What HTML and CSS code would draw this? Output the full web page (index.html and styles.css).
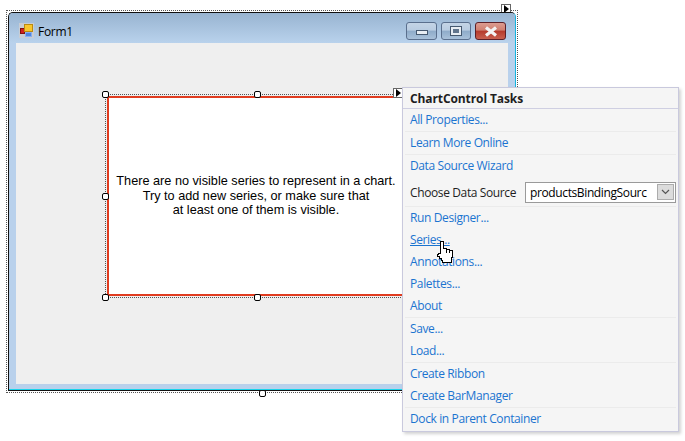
FILE: index.html
```html
<!DOCTYPE html>
<html lang="en">
<head>
<meta charset="utf-8">
<title>ChartControl Tasks</title>
<link rel="stylesheet" href="styles.css">
</head>
<body>
<main class="canvas">
  <div class="form-select"></div>
  <span class="tag tag-form"><i></i></span>
  <span class="handle h-form"></span>
  <section class="form">
    <header class="titlebar">
      <svg class="form-icon" width="16" height="16" viewBox="0 0 16 16">
        <rect x="0" y="0" width="15" height="15" fill="#c9cdd3"/>
        <rect x="1.500" y="5.500" width="4" height="5" fill="#d0201c" stroke="#801010"/>
        <rect x="5.500" y="1.500" width="8" height="7" fill="#f8c62c" stroke="#b98a10"/>
        <rect x="6.500" y="9.500" width="6" height="4" fill="#4f84e0" stroke="#86aeee"/>
      </svg>
      <span class="form-title">Form1</span>
      <div class="winbtns">
        <button class="winbtn"><span class="glyph-min"></span></button>
        <button class="winbtn"><span class="glyph-max"></span></button>
        <button class="winbtn winbtn-close">
          <svg width="16" height="11" viewBox="0 0 16 11"><path d="M3 1.500 L13 9.500 M13 1.500 L3 9.500" stroke="#f4f4f4" stroke-width="3.200" fill="none"/></svg>
        </button>
      </div>
    </header>
    <div class="client"></div>
  </section>
  <div class="chart-select"></div>
  <div class="chart">
    <p>There are no visible series to represent in a chart.<br>Try to add new series, or make sure that<br>at least one of them is visible.</p>
  </div>
  <span class="handle h-tl"></span>
  <span class="handle h-tm"></span>
  <span class="handle h-ml"></span>
  <span class="handle h-bl"></span>
  <span class="handle h-bm"></span>
  <span class="tag tag-chart"><i></i></span>
  <aside class="tasks">
    <h2 class="tasks-head">ChartControl Tasks</h2>
    <div class="group">
      <a class="row">All Properties...</a>
    </div>
    <div class="group">
      <a class="row">Learn More Online</a>
    </div>
    <div class="group">
      <a class="row">Data Source Wizard</a>
      <div class="row-choose">
        <label>Choose Data Source</label>
        <div class="combo"><span class="combo-text">productsBindingSourc</span>
          <span class="combo-btn"><svg width="9" height="6" viewBox="0 0 9 6"><path d="M1 1 L4.500 4.500 L8 1" fill="none" stroke="#555" stroke-width="1.200"/></svg></span>
        </div>
      </div>
    </div>
    <div class="group">
      <a class="row">Run Designer...</a>
      <a class="row row-hover">Series...</a>
      <a class="row">Annotations...</a>
      <a class="row">Palettes...</a>
      <a class="row">About</a>
    </div>
    <div class="group">
      <a class="row">Save...</a>
      <a class="row">Load...</a>
    </div>
    <div class="group">
      <a class="row">Create Ribbon</a>
      <a class="row">Create BarManager</a>
    </div>
    <div class="group group-last">
      <a class="row">Dock in Parent Container</a>
    </div>
  </aside>
  <svg class="cursor" width="17" height="23" viewBox="0 0 17 23" shape-rendering="crispEdges">
    <path d="M3.500 .5 H6.500 V7.500 H9.500 V8.500 H12.500 V9.500 H15.500 V16.500 H14.500 V21.500 H5.500 V19.500 H4.500 V17.500 H2.500 V15.500 H.5 V13.500 H1.500 V12.500 H3.500 Z" fill="#fff" stroke="#000"/>
    <path d="M9.500 8 V12 M12.500 9 V12" stroke="#000" fill="none"/>
  </svg>
</main>
</body>
</html>
```
FILE: styles.css
```css
* { box-sizing: border-box; }
html, body { margin: 0; padding: 0; background: #fff; }
.canvas { position: relative; width: 685px; height: 441px; overflow: hidden; font-family: "Open Sans", "Noto Sans", sans-serif; }

.form-select { position: absolute; left: 6px; top: 10px; width: 512px; height: 383px; border: 1px dotted #555; }
.form { position: absolute; left: 8px; top: 12px; width: 508px; height: 379px; display: flex; flex-direction: column; border: 1px solid #111; border-right-color: #14b4e0; border-radius: 5px 5px 0 0; box-shadow: inset 0 -1px 0 #19d3ea; background: #b9d1ec; overflow: hidden; }
.titlebar { height: 30px; flex: none; display: flex; align-items: center; padding: 6px 9px 0 10px; background: linear-gradient(#98b4d1, #b9d2ec); }
.form-icon { flex: none; }
.form-title { margin-left: 3px; font-size: 12px; letter-spacing: -.3px; color: #000; }
.winbtns { margin-left: auto; display: flex; gap: 4px; }
.winbtn { width: 31px; height: 18px; padding: 0; display: flex; align-items: center; justify-content: center; border: 1px solid #5a6f8d; border-radius: 3px; background: linear-gradient(#c4d4e6 0, #b9cce1 45%, #8eabc9 50%, #a9c1da 100%); }
.winbtn:nth-child(2) { width: 30px; }
.winbtn-close { border-color: #5c2028; background: linear-gradient(#dc9c90 0, #d07f70 45%, #b53a2c 50%, #c9604f 100%); }
.glyph-min { width: 12px; height: 5px; margin-top: 3px; background: #e8edf3; border: 1px solid #45586f; }
.glyph-max { width: 12px; height: 10px; background: #e8edf3; border: 1px solid #45586f; box-shadow: inset 0 0 0 2px #e8edf3, inset 0 0 0 5px #61758d; }
.client { flex: none; height: 341px; width: 492px; margin-left: 7px; background: #efefef; }

.chart-select { position: absolute; left: 105px; top: 94px; width: 310px; height: 204px; border: 1px dotted #555; }
.chart { position: absolute; left: 107px; top: 96px; width: 306px; height: 200px; background: #fff; border: 2px solid #e03c20; display: flex; align-items: center; justify-content: center; }
.chart p { margin: 0; transform: translateX(-4px); text-align: center; font: 12.7px/14.5px "Liberation Sans", Arial, sans-serif; color: #000; }

.handle { position: absolute; width: 7px; height: 7px; background: #fff; border: 1px solid #000; border-radius: 2px; }
.h-form { left: 259px; top: 390px; }
.h-tl { left: 102px; top: 91px; }
.h-tm { left: 254px; top: 91px; }
.h-ml { left: 102px; top: 193px; }
.h-bl { left: 102px; top: 294px; }
.h-bm { left: 254px; top: 294px; }

.tag { position: absolute; width: 10px; height: 10px; background: #fff; border: 1px solid #666; display: flex; align-items: center; justify-content: center; }
.tag i { width: 0; height: 0; border-left: 5px solid #000; border-top: 4px solid transparent; border-bottom: 4px solid transparent; }
.tag-form { left: 501px; top: 4px; }
.tag-chart { left: 393px; top: 88px; }

.tasks { position: absolute; left: 402px; top: 87px; width: 277px; height: 345px; display: flex; flex-direction: column; background: #f5f5f5; border: 1px solid #c9c9dd; box-shadow: 2px 2px 3px rgba(0,0,0,.18); font-size: 12px; letter-spacing: -.38px; }
.tasks-head { margin: 0; height: 21px; flex: none; padding: 0 7px; display: flex; align-items: center; font-size: 12px; font-weight: 700; color: #1e1e1e; border-bottom: 1px solid #cfcfe2; letter-spacing: -.1px; }
.group { display: flex; flex-direction: column; margin: 0 2px; border-bottom: 1px solid #ebebeb; flex: none; }
.group-last { border-bottom: 0; }
.row { height: 22px; padding: 0 5px 1px; display: flex; align-items: center; color: #1b74d0; white-space: nowrap; }
.row-hover { text-decoration: underline; }
.row-choose { height: 29px; padding: 1px 0 0 5px; display: flex; align-items: center; justify-content: space-between; color: #1e1e1e; }
.row-choose label { white-space: nowrap; }
.combo { width: 151px; height: 21px; display: flex; align-items: center; background: #fff; border: 1px solid #9a9a9a; }
.combo-text { flex: 1; padding-left: 4px; font-size: 12px; color: #000; white-space: nowrap; overflow: hidden; }
.combo-btn { width: 17px; height: 16px; margin-right: 1px; display: flex; align-items: center; justify-content: center; background: #dcdcdc; border: 1px solid #acacac; }
.cursor { position: absolute; left: 437px; top: 241px; }
```
